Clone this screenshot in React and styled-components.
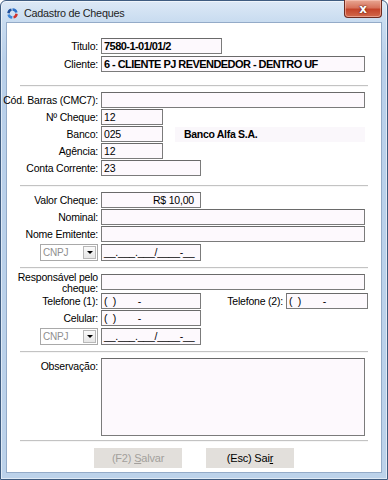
import React from 'react';
import styled, { createGlobalStyle } from 'styled-components';

const GlobalStyle = createGlobalStyle`
    html, body {
        margin: 0;
        padding: 0;
        background: #ffffff;
    }
    body {
        font-family: 'Liberation Sans', Arial, sans-serif;
        font-size: 10.5px;
        letter-spacing: -0.2px;
        color: #000;
    }
`;

const Window = styled.div`
    box-sizing: border-box;
    width: 388px;
    height: 480px;
    display: flex;
    flex-direction: column;
    border: 1px solid #3f5c80;
    border-radius: 6px 6px 0 0;
    padding: 0 5px 6px 5px;
    background: linear-gradient(180deg, #dde9f6 0px, #c9dcf0 20px, #b9d0ea 60px, #bcd2ea 100%);
    box-shadow: inset 0 0 0 1px rgba(255, 255, 255, 0.55);
`;

const TitleBar = styled.div`
    height: 20px;
    display: flex;
    align-items: center;
    position: relative;
`;

const TitleIcon = styled.svg`
    width: 13px;
    height: 13px;
    margin-top: 4px;
`;

const TitleText = styled.span`
    font-family: 'Liberation Sans', Arial, sans-serif;
    font-size: 10.8px;
    letter-spacing: -0.25px;
    color: #1e1e1e;
    margin-left: 5px;
    margin-top: 4px;
`;

// botão fechar fica sobre a moldura
const CloseButton = styled.div`
    position: absolute;
    top: -1px;
    right: 0;
    width: 38px;
    height: 18px;
    box-sizing: border-box;
    border: 1px solid #6e2b20;
    border-top: 0;
    border-radius: 0 0 4px 4px;
    background: linear-gradient(180deg, #e8a793 0%, #d7735c 45%, #c4442a 55%, #d2694c 100%);
    box-shadow: inset 0 0 0 1px rgba(255, 210, 200, 0.5);
    display: flex;
    align-items: center;
    justify-content: center;
    color: #fff;
    font-family: 'DejaVu Sans', sans-serif;
    font-weight: bold;
    font-size: 12px;
    text-shadow: 0 0 2px #5a1a10, 0 0 1px #5a1a10;
`;

const Client = styled.div`
    flex: 1;
    display: flex;
    flex-direction: column;
    background: #ffffff;
    border: 1px solid #94abc8;
    margin-top: 1px;
`;

const Section = styled.div`
    display: flex;
    flex-direction: column;
    gap: ${p => p.$gap ?? 1}px;
    padding-top: ${p => p.$top}px;
`;

const Separator = styled.div`
    height: 1px;
    background: #c3c3c3;
    margin: ${p => p.$top}px 13px 0 13px;
    box-shadow: 0 1px 0 #f6f6f6;
`;

const Row = styled.div`
    display: flex;
    align-items: ${p => (p.$top ? 'flex-start' : 'center')};
    gap: 3px;
    height: ${p => p.$h ?? 16}px;
    margin-top: ${p => p.$mt ?? 0}px;
`;

const Label = styled.div`
    width: ${p => p.$w ?? 91}px;
    flex: none;
    text-align: right;
    white-space: nowrap;
    display: flex;
    justify-content: flex-end;
    line-height: ${p => p.$lh ?? 16}px;
    margin-top: ${p => p.$mt ?? 0}px;
    ${p => p.$wrap && 'white-space: normal;'}
`;

const Field = styled.div`
    box-sizing: border-box;
    width: ${p => p.$w}px;
    height: ${p => p.$h ?? 16}px;
    flex: none;
    border: 1px solid #7b7b7b;
    border-top-color: #6a6a6a;
    background: #fdf9fd;
    padding: 0 2px;
    line-height: 14px;
    white-space: pre;
    overflow: hidden;
    font-weight: ${p => (p.$bold ? 'bold' : 'normal')};
    text-align: ${p => (p.$right ? 'right' : 'left')};
    ${p => p.$right && 'padding-right: 6px;'}
    ${p => p.$bold && 'font-size: 11px; letter-spacing: -0.55px; padding-left: 2px;'}
`;

const BankName = styled.div`
    margin-left: 9px;
    width: 181px;
    height: 15px;
    padding-left: 9px;
    background: #faf7fb;
    font-weight: bold;
    line-height: 15px;
    letter-spacing: -0.3px;
`;

const Combo = styled.div`
    box-sizing: border-box;
    width: 58px;
    height: 17px;
    border: 1px solid #a9a9a9;
    background: #fff;
    display: flex;
    align-items: center;
    justify-content: space-between;
    padding-left: 2px;
    color: #8f8f8f;
    font-size: 10px;
`;

const ComboArrow = styled.div`
    width: 13px;
    height: 13px;
    margin-right: 1px;
    box-sizing: border-box;
    border: 1px solid #b8b8b8;
    background: linear-gradient(180deg, #fafafa, #e6e6e6);
    display: flex;
    align-items: center;
    justify-content: center;

    &::after {
        content: '';
        border-left: 3px solid transparent;
        border-right: 3px solid transparent;
        border-top: 3px solid #000;
    }
`;

const Memo = styled(Field)`
    height: 78px;
`;

const Footer = styled.div`
    display: flex;
    justify-content: center;
    gap: 24px;
    padding-top: 7px;
`;

const Button = styled.div`
    width: 88px;
    height: 20px;
    background: #e2dfdb;
    display: flex;
    align-items: center;
    justify-content: center;
    color: ${p => (p.$disabled ? '#a39f9b' : '#000')};
    font-size: 11px;

    u {
        text-decoration: underline;
        text-underline-offset: 1px;
    }
`;

const AppIcon = () => (
    <TitleIcon viewBox="0 0 16 16">
        <path d="M8 1.5 A6.5 6.5 0 0 1 14.3 6.5 L11.3 7 A3.5 3.5 0 0 0 8 4.5 Z" fill="#2b6fc7" />
        <path d="M14.5 8.5 A6.5 6.5 0 0 1 9.5 14.3 L9 11.3 A3.5 3.5 0 0 0 11.5 8 Z" fill="#d2332d" />
        <path d="M7.5 14.5 A6.5 6.5 0 0 1 1.7 9.5 L4.7 9 A3.5 3.5 0 0 0 8 11.5 Z" fill="#3d86d8" />
        <path d="M1.5 7.5 A6.5 6.5 0 0 1 6.5 1.7 L7 4.7 A3.5 3.5 0 0 0 4.5 8 Z" fill="#1f4f9c" />
    </TitleIcon>
);

const MASK_DOC = '__.___.___/____-__';
const MASK_FONE = '(  )        -';

export default function App() {
    return (
        <>
            <GlobalStyle />
            <Window>
                <TitleBar>
                    <AppIcon />
                    <TitleText>Cadastro de Cheques</TitleText>
                    <CloseButton>x</CloseButton>
                </TitleBar>

                <Client>
                    {/* título / cliente */}
                    <Section $top={15} $gap={2}>
                        <Row>
                            <Label>Titulo:</Label>
                            <Field $w={121} $bold>7580-1-01/01/2</Field>
                        </Row>
                        <Row>
                            <Label>Cliente:</Label>
                            <Field $w={264} $bold>6 - CLIENTE PJ REVENDEDOR - DENTRO UF</Field>
                        </Row>
                    </Section>

                    <Separator $top={13} />

                    {/* dados do cheque */}
                    <Section $top={6}>
                        <Row>
                            <Label>Cód. Barras (CMC7):</Label>
                            <Field $w={264} />
                        </Row>
                        <Row>
                            <Label>Nº Cheque:</Label>
                            <Field $w={62}>12</Field>
                        </Row>
                        <Row>
                            <Label>Banco:</Label>
                            <Field $w={62}>025</Field>
                            <BankName>Banco Alfa S.A.</BankName>
                        </Row>
                        <Row>
                            <Label>Agência:</Label>
                            <Field $w={62}>12</Field>
                        </Row>
                        <Row>
                            <Label>Conta Corrente:</Label>
                            <Field $w={100}>23</Field>
                        </Row>
                    </Section>

                    <Separator $top={9} />

                    {/* emitente */}
                    <Section $top={6}>
                        <Row>
                            <Label>Valor Cheque:</Label>
                            <Field $w={100} $right>R$ 10,00</Field>
                        </Row>
                        <Row>
                            <Label>Nominal:</Label>
                            <Field $w={264} />
                        </Row>
                        <Row>
                            <Label>Nome Emitente:</Label>
                            <Field $w={264} />
                        </Row>
                        <Row $mt={1} $h={17}>
                            <Label>
                                <Combo>CNPJ<ComboArrow /></Combo>
                            </Label>
                            <Field $w={100} $h={17}>{MASK_DOC}</Field>
                        </Row>
                    </Section>

                    <Separator $top={6} />

                    {/* responsável */}
                    <Section $top={6}>
                        <Row $top $h={18}>
                            <Label $lh={11} $mt={-2} $wrap>Responsável pelo<br />cheque:</Label>
                            <Field $w={264} />
                        </Row>
                        <Row>
                            <Label>Telefone (1):</Label>
                            <Field $w={100}>{MASK_FONE}</Field>
                            <Label $w={79}>Telefone (2):</Label>
                            <Field $w={82}>{MASK_FONE}</Field>
                        </Row>
                        <Row>
                            <Label>Celular:</Label>
                            <Field $w={100}>{MASK_FONE}</Field>
                        </Row>
                        <Row $mt={1} $h={17}>
                            <Label>
                                <Combo>CNPJ<ComboArrow /></Combo>
                            </Label>
                            <Field $w={100} $h={17}>{MASK_DOC}</Field>
                        </Row>
                    </Section>

                    <Separator $top={6} />

                    <Section $top={6}>
                        <Row $top $h={78}>
                            <Label>Observação:</Label>
                            <Memo $w={264} />
                        </Row>
                    </Section>

                    <Separator $top={4} />

                    <Footer>
                        <Button $disabled>(F2)&nbsp;<u>S</u>alvar</Button>
                        <Button>(Esc) Sai<u>r</u></Button>
                    </Footer>
                </Client>
            </Window>
        </>
    );
}
